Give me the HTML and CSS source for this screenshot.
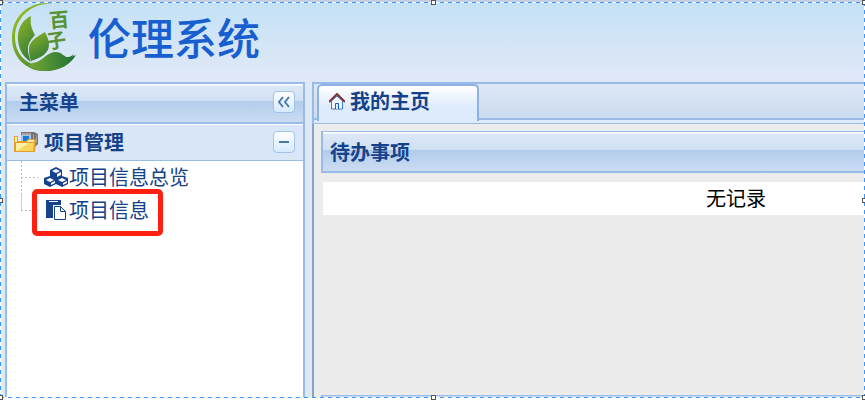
FILE: index.html
```
<!DOCTYPE html>
<html lang="zh-CN">
<head>
<meta charset="utf-8">
<title>伦理系统</title>
<link rel="stylesheet" href="styles.css">
</head>
<body>
<div class="app">
    <header class="banner">
        <svg class="logo" viewBox="0 0 66 70" aria-hidden="true">
            <defs>
                <linearGradient id="ring" x1="0" y1="0" x2="1" y2="1">
                    <stop offset="0" stop-color="#a3c51c"/>
                    <stop offset="1" stop-color="#23743a"/>
                </linearGradient>
                <linearGradient id="leaf" x1="0" y1="0" x2="0.4" y2="1">
                    <stop offset="0" stop-color="#8fb525"/>
                    <stop offset="1" stop-color="#397f36"/>
                </linearGradient>
                <linearGradient id="ground" x1="0" y1="0" x2="1" y2="0">
                    <stop offset="0" stop-color="#78a832"/>
                    <stop offset="1" stop-color="#1c7135"/>
                </linearGradient>
            </defs>
            <path fill="url(#ring)" d="M45 2C25-3 2 10 2 36c0 20 15 33 32 33 14 0 25-7 30-17-8 6-18 12-32 12C15 63 5 51 5 35 5 14 25-1 45 2z"/>
            <path fill="url(#leaf)" d="M21 14C12 18 7 27 8 38c1 12 7 18 13 22-6-16-2-20 4-27-4-7-5-12-4-19z"/>
            <path fill="url(#leaf)" d="M35 30c-11 6-17 11-16 19 0 4 1 7 2 10 10-3 18-8 18-16 0-5-2-9-4-13z"/>
            <path fill="url(#ground)" d="M22 61c9 0 13-9 22-11 8-1 9 5 14 5 3 0 5-1 8-2-5 9-16 16-30 16-9 0-14-3-18-6 3 0 3-1 4-2z"/>
            <text class="logo-text" x="39" y="25" transform="rotate(-5 50 16)">百</text>
            <text class="logo-text" x="36" y="46" transform="rotate(-8 46 38)">子</text>
        </svg>
        <h1 class="title">伦理系统</h1>
    </header>

    <div class="main">
        <nav class="menu">
            <div class="bar menu-bar">
                <h2>主菜单</h2>
                <button type="button" class="tool" aria-label="收起菜单">
                    <svg viewBox="0 0 20 20"><path d="M9 5L5 10l4 5M15 5l-4 5 4 5"/></svg>
                </button>
            </div>
            <div class="group-bar">
                <svg class="folder" viewBox="0 0 24 22" aria-hidden="true">
                    <path fill="#77736c" d="M7 1h13l4 2v10l-3 3H7z"/>
                    <path fill="#aaa69e" d="M8 2h9v2H8zM19 3h1v11h-1zM22 4h1v8h-1z"/>
                    <path fill="#a9c4e0" d="M7 4h10v7H7z"/>
                    <path fill="#1778dd" d="M9 5h6v6H9z"/>
                    <path fill="#e5a02c" d="M0 5h4v5h8l2-2h7l1 1-1 12H0z"/>
                    <path fill="#fff2b8" d="M1 6h2v5h10l2-2h5v2H1z"/>
                    <path fill="#f9d65c" d="M2 12h18l-1 8H2z"/>
                    <path fill="#fdeea5" d="M2 12h13L3 20H2z"/>
                </svg>
                <h3>项目管理</h3>
                <button type="button" class="tool" aria-label="折叠">
                    <svg viewBox="0 0 20 20"><path d="M5 10h10"/></svg>
                </button>
            </div>
            <ul class="tree">
                <li>
                    <a href="#overview">
                        <svg class="node-icon" viewBox="0 0 24 20" aria-hidden="true">
                            <path fill="#15428b" d="M12 0l6 3v6l6 2v6l-6 3-6-3-6 3-6-3v-6l6-2V3z"/>
                            <path fill="#fff" d="M12 2l4 2-4 2-4-2zM13 7l4-2v3l-4 2zM6 11l4 2-4 2-4-2zM7 16l4-2v2l-4 2zM18 11l4 2-4 2-4-2zM19 16l4-2v2l-4 2z"/>
                        </svg>项目信息总览</a>
                </li>
                <li class="marked">
                    <a href="#info">
                        <svg class="node-icon" viewBox="0 0 24 20" aria-hidden="true">
                            <path fill="#15428b" d="M2 0h15v5H9v13H2z"/>
                            <path fill="#fff" d="M5 1h9v1H5z"/>
                            <path fill="#fff" stroke="#15428b" d="M10.500 6.500h6l5 5v8h-11zM16.500 6.500v5h5"/>
                        </svg>项目信息</a>
                </li>
            </ul>
        </nav>

        <main class="desk">
            <div class="tabs">
                <button type="button" class="tab">
                    <svg class="home" viewBox="0 0 16 17" aria-hidden="true">
                        <path fill="#eef6ff" stroke="#3f78bd" d="M2.500 8v8h11V8L8 3z"/>
                        <path fill="#dcebff" stroke="#1464c8" d="M6.500 16V10.500h3V16"/>
                        <path fill="none" stroke="#7c3434" stroke-width="2" d="M0 9l8-8 8 8"/>
                    </svg>我的主页</button>
            </div>
            <div class="desk-body">
                <section class="portlet">
                    <div class="bar portlet-bar"><h2>待办事项</h2></div>
                    <table class="records">
                        <tr><td>无记录</td></tr>
                    </table>
                </section>
                <section class="portlet-next"></section>
            </div>
        </main>
    </div>

    <!-- capture selection frame -->
    <div class="frame">
        <i class="edge top"></i><i class="edge bottom"></i><i class="edge left"></i><i class="edge right"></i>
        <i class="grip nw"></i><i class="grip n"></i><i class="grip ne"></i>
        <i class="grip w"></i><i class="grip e"></i>
        <i class="grip sw"></i><i class="grip s"></i><i class="grip se"></i>
    </div>
</div>
</body>
</html>
```
FILE: styles.css
```
html, body {
    height: 100%;
    margin: 0;
    overflow: hidden;
    background: #fff;
}
body, button {
    font-family: "Noto Sans CJK SC", sans-serif;
    font-size: 20px;
}
*, *::before, *::after {
    box-sizing: border-box;
}
h1, h2, h3 {
    margin: 0;
}
h2, h3 {
    font-size: 20px;
    line-height: 28px;
    color: #15428b;
}
.app {
    position: relative;
    display: flex;
    flex-direction: column;
    height: calc(100% - 5px);
    border-top: 2px solid #c4cfe2;
    background: #dfe8f6;
}

/* banner */
.banner {
    display: flex;
    flex: none;
    gap: 12px;
    height: 80px;
    padding: 0 10px;
    background: linear-gradient(#c3e1f7, #dfe8f6 90%);
}
.logo {
    width: 66px;
    height: 70px;
}
.logo-text {
    font-size: 20px;
    font-weight: bold;
    fill: #579332;
}
.title {
    font-size: 43px;
    line-height: 68px;
    font-weight: 500;
    color: #175fd0;
}

.main {
    display: flex;
    flex: 1;
    gap: 7px;
    min-height: 0;
    padding-left: 5px;
}
.bar {
    display: flex;
    align-items: center;
    justify-content: space-between;
    background: linear-gradient(#fff 0, #fff 1px, #dce8f6 2px, #cfdff3 46%, #b3ccec 46%, #cbdcf2 100%);
}

/* left menu */
.menu {
    display: flex;
    flex-direction: column;
    flex: none;
    width: 300px;
    border: solid #99bbe8;
    border-width: 2px 2px 0;
    background: #fff;
}
.menu-bar {
    height: 40px;
    padding: 0 8px 2px 12px;
    border-bottom: 2px solid #99bbe8;
}
.group-bar {
    display: flex;
    align-items: center;
    gap: 6px;
    height: 37px;
    padding: 0 8px 2px 7px;
    border-top: 1px solid #fff;
    border-bottom: 1px solid #99bbe8;
    background: #d9e7f8;
}
.folder {
    width: 24px;
    height: 22px;
}
.group-bar .tool {
    margin-left: auto;
}
.tool {
    width: 22px;
    height: 22px;
    padding: 0;
    border: 1px solid #a3c2ea;
    border-radius: 4px;
    background: linear-gradient(#fff, #d6eafe);
}
.tool svg {
    display: block;
    fill: none;
    stroke: #4a7aad;
    stroke-width: 2;
}
.tree {
    margin: 0;
    padding: 0 0 0 14px;
    list-style: none;
}
.tree li {
    display: flex;
    align-items: center;
    height: 33px;
    background: linear-gradient(#bbb 50%, transparent 50%) 0 0 / 1px 4px repeat-y;
}
.tree li:last-child {
    background-size: 1px 17px;
    background: linear-gradient(#ccc, #ccc) 0 0 / 1px 16px no-repeat;
}
.tree li::before {
    content: "";
    width: 17px;
    height: 1px;
    background: repeating-linear-gradient(90deg, #bbb 0, #bbb 2px, #fff 2px, #fff 4px);
}
.tree li a {
    display: flex;
    align-items: center;
    height: 100%;
    padding: 0 0 2px 6px;
    color: #15428b;
    text-decoration: none;
    line-height: 28px;
}
.node-icon {
    width: 24px;
    height: 20px;
    margin-right: 1px;
}
.tree .marked {
    position: relative;
}
.marked::after {
    content: "";
    position: absolute;
    top: -5px;
    left: 11px;
    width: 131px;
    height: 47px;
    border: 5px solid #ff2012;
    border-radius: 5px;
}

/* right side */
.desk {
    display: flex;
    flex-direction: column;
    flex: 1;
    min-width: 0;
    overflow: hidden;
}
.tabs {
    flex: none;
    height: 42px;
    padding-left: 3px;
    border: solid #99bbe8;
    border-width: 2px 0 1px 2px;
    background: linear-gradient(#dde8f5 0, #cbdbf0 34px, #99bbe8 34px, #99bbe8 36px, #deebfc 36px);
}
.tab {
    display: flex;
    align-items: center;
    gap: 5px;
    width: 162px;
    height: 37px;
    padding: 0 0 5px 10px;
    border: 2px solid #8db2e3;
    border-bottom: 0;
    border-radius: 5px 5px 0 0;
    background: linear-gradient(#fff, #deebfc 60%);
    color: #15428b;
    font-weight: bold;
    line-height: 28px;
}
.home {
    width: 16px;
    height: 17px;
}
.desk-body {
    display: flex;
    flex-direction: column;
    flex: 1;
    min-height: 0;
    padding: 7px 0 0 7px;
    border-left: 2px solid #8aa3c4;
    background: #ececec;
}
/* portlets run on past the right edge of the window */
.portlet {
    flex: 1;
    min-width: 830px;
}
.portlet-bar {
    height: 42px;
    padding-left: 7px;
    border: solid #99bbe8;
    border-width: 1px 2px 2px;
}
.records {
    width: calc(100% - 4px);
    margin: 9px 2px 0;
    border-collapse: collapse;
    background: #fff;
}
.records td {
    height: 33px;
    padding: 0 0 2px;
    line-height: 28px;
    text-align: center;
    color: #000;
}
.portlet-next {
    height: 3px;
    min-width: 830px;
    border: solid #99bbe8;
    border-width: 1px 2px 0;
    background: #cbdcf2;
}

/* selection frame */
.frame {
    position: absolute;
    inset: 0;
    pointer-events: none;
}
.edge, .grip {
    position: absolute;
}
.top, .bottom {
    left: 0;
    right: 0;
    height: 1px;
    background: repeating-linear-gradient(90deg, #3399ff 0, #3399ff 4px, #fff 4px, #fff 8px);
}
.left, .right {
    top: 0;
    bottom: 0;
    width: 1px;
    background: repeating-linear-gradient(#3399ff 0, #3399ff 4px, #fff 4px, #fff 8px);
}
.top { top: 0; }
.bottom { bottom: 0; }
.left { left: 0; }
.right { right: 0; }
.grip {
    width: 5px;
    height: 5px;
    border: 1px solid #555;
    background: #fff;
}
.nw, .n, .ne { top: -2px; }
.w, .e { top: 50%; margin-top: -2px; }
.sw, .s, .se { bottom: -2px; }
.nw, .w, .sw { left: -2px; }
.n, .s { left: 50%; margin-left: -2px; }
.ne, .e, .se { right: -2px; }
```
